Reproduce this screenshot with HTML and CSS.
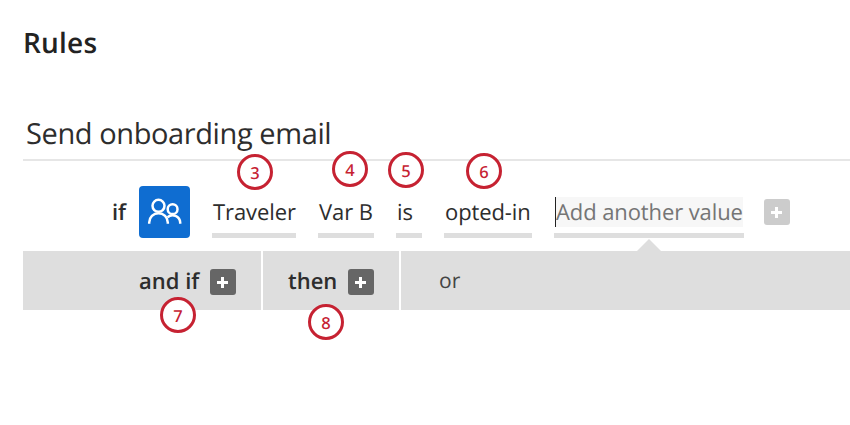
FILE: index.html
```html
<!DOCTYPE html>
<html lang="en">
<head>
    <meta charset="UTF-8">
    <meta name="viewport" content="width=device-width, initial-scale=1.0">
    <title>Rules</title>
    <link rel="stylesheet" href="styles.css">
</head>
<body>
    <h1>Rules</h1>

    <div class="rule">
        <h2><span>Send onboarding email</span></h2>

        <div class="condition">
            <span class="if">if</span>
            <span class="people">
                <svg width="52" height="52" viewBox="0 0 52 52" fill="none" stroke="#fff" stroke-width="2.5">
                    <circle cx="19.5" cy="19.8" r="6"/>
                    <path d="M10.2 37.8v-1.3a9.3 9.3 0 0 1 18.6 0v1.3"/>
                    <circle cx="33.6" cy="23.2" r="4.9"/>
                    <path d="M28.6 31.2a7.6 7.6 0 0 1 12.6 5.3v1.3"/>
                </svg>
            </span>
            <div class="field traveler"><span>Traveler</span><b class="badge b3">3</b></div>
            <div class="field var"><span>Var B</span><b class="badge b4">4</b></div>
            <div class="field is"><span>is</span><b class="badge b5">5</b></div>
            <div class="field opted"><span>opted-in</span><b class="badge b6">6</b></div>
            <div class="field add"><span>Add another value</span></div>
            <span class="plus light"></span>
        </div>

        <div class="actions">
            <div class="action and-if"><span>and if</span><span class="plus"></span><b class="badge b7">7</b></div>
            <div class="action then"><span>then</span><span class="plus"></span><b class="badge b8">8</b></div>
            <div class="action or"><span>or</span></div>
        </div>
    </div>
</body>
</html>
```
FILE: styles.css
```css
* {
    box-sizing: border-box;
}

body {
    margin: 0;
    padding: 23px 0 0 23px;
    height: 425px;
    overflow: hidden;
    background: #fff;
    color: #2d2d2d;
    font-family: "Open Sans", "Noto Sans", sans-serif;
    font-size: 22px;
    text-rendering: geometricPrecision;
    white-space: nowrap;
}

h1 {
    margin: 0;
    height: 40px;
    font-size: 28px;
    font-weight: 600;
    letter-spacing: 0.2px;
    line-height: 40px;
    color: #222;
}

h2 {
    margin: 50px 0 0;
    padding-left: 3px;
    height: 48px;
    border-bottom: 2px solid #e6e6e6;
    font-size: 29px;
    font-weight: 400;
    letter-spacing: -0.4px;
    line-height: 42px;
}

/* condition row */
.condition {
    display: flex;
    height: 90px;
    padding-top: 25px;
    letter-spacing: -0.1px;
    line-height: 31px;
}

.if {
    width: 27px;
    margin: 11px 0 0 89px;
    font-weight: 600;
}

.people {
    width: 51px;
    height: 52px;
    margin-right: 22px;
    background: #0f6dd1;
    border-radius: 4px;
}

.people svg {
    display: block;
}

.field {
    position: relative;
    height: 41px;
    margin: 11px 22px 0 0;
    padding-left: 1px;
    border-bottom: 5px solid #dedede;
}

.traveler {
    width: 84px;
}

.var {
    width: 56px;
}

.is {
    width: 26px;
}

.opted {
    width: 88px;
}

.add {
    width: 190px;
    margin-right: 20px;
    color: #757575;
}

.add span {
    display: block;
    width: 188px;
    height: 30px;
    background: #f7f7f7;
    border-left: 1px solid #222;
}

/* arrow that joins the active field to the bar below */
.add::after {
    content: '';
    position: absolute;
    left: 83px;
    top: 42px;
    border: 12px solid transparent;
    border-top: 0;
    border-bottom-color: #dedede;
}

.plus {
    position: relative;
    flex: none;
    width: 26px;
    height: 26px;
    background: #666;
    border-radius: 3px;
}

.plus::before,
.plus::after {
    content: '';
    position: absolute;
    left: 7px;
    top: 12px;
    width: 11px;
    height: 3px;
    background: #fff;
}

.plus::after {
    left: 11px;
    top: 8px;
    width: 3px;
    height: 11px;
}

.plus.light {
    margin-top: 13px;
    background: #ccc;
}

/* grey bar */
.actions {
    display: flex;
    gap: 2px;
    height: 59px;
    line-height: 28px;
}

.action {
    position: relative;
    display: flex;
    align-items: center;
    padding-top: 2px;
    background: #dedede;
    font-weight: 600;
}

.action span:first-child {
    padding-bottom: 2px;
}

.and-if {
    justify-content: space-between;
    width: 238px;
    padding-left: 116px;
    padding-right: 25px;
}

.then {
    justify-content: space-between;
    width: 136px;
    padding-left: 25px;
    padding-right: 25px;
}

.or {
    flex: 1;
    padding: 2px 0 0 38px;
    color: #444;
    font-size: 21px;
    font-weight: 400;
}

/* numbered callouts */
.badge {
    position: absolute;
    z-index: 1;
    width: 36px;
    height: 36px;
    border: 3px solid #c62232;
    border-radius: 50%;
    background: #fff;
    color: #c62232;
    font-family: "Noto Sans", sans-serif;
    font-size: 16.5px;
    font-weight: 500;
    letter-spacing: 0;
    line-height: 31px;
    text-align: center;
}

.b3 {
    left: 25px;
    top: -43px;
}

.b4 {
    left: 14px;
    top: -46px;
}

.b5 {
    left: -8px;
    top: -45px;
}

.b6 {
    left: 22px;
    top: -44px;
}

.b7 {
    left: 137px;
    top: 46px;
}

.b8 {
    left: 45px;
    top: 53px;
}
```
